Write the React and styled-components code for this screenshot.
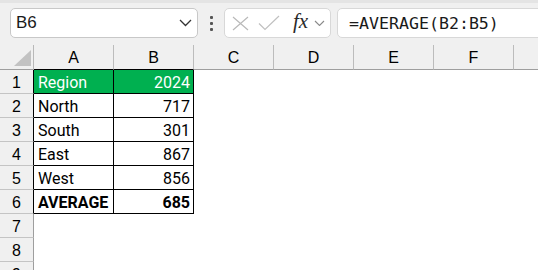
import React from "react";
import styled, { createGlobalStyle } from "styled-components";

const GlobalStyle = createGlobalStyle`
  html, body {
    margin: 0;
    padding: 0;
    background: #fff;
  }
  body {
    font-family: "Liberation Sans", Arial, sans-serif;
    color: #000;
  }
`;

const Page = styled.div`
  width: 538px;
  height: 270px;
  overflow: hidden;
  background: #fff;
`;

const Toolbar = styled.div`
  box-sizing: border-box;
  height: 45px;
  background: #f0f0f0;
  border-top: 3px solid #e4e4e4;
  padding: 5px 0 0 10px;
  display: flex;
  align-items: flex-start;
  overflow: hidden;
`;

const Box = styled.div`
  box-sizing: border-box;
  height: 30px;
  background: #fff;
  border: 1px solid ${(p) => p.$border || "#cfcfcf"};
  border-radius: 5px;
  display: flex;
  align-items: center;
  flex-shrink: 0;
`;

const NameBox = styled(Box)`
  width: 188px;
  padding: 0 5px 0 5px;
  justify-content: space-between;
  font-size: 17px;
  color: #1a1a1a;
`;

const Dots = styled.div`
  width: 26px;
  height: 30px;
  display: flex;
  flex-direction: column;
  align-items: center;
  justify-content: center;
  gap: 3px;
  flex-shrink: 0;

  span {
    width: 3px;
    height: 3px;
    background: #555;
    border-radius: 1px;
  }
`;

const ActionBox = styled(Box)`
  width: 107px;
  padding-left: 7px;
`;

const Fx = styled.span`
  font-family: "Liberation Serif", "Times New Roman", serif;
  font-style: italic;
  font-size: 21px;
  color: #2a2a2a;
  margin-left: 13px;
  margin-top: -3px;
`;

const FxChevron = styled.span`
  display: flex;
  margin-left: 6px;
`;

const FormulaBox = styled(Box)`
  width: 240px;
  margin-left: 6px;
  padding-left: 11px;
  font-family: "DejaVu Sans Mono", "Liberation Mono", monospace;
  font-size: 16.6px;
  color: #1a1a1a;
`;

const Row = styled.div`
  display: flex;
  height: ${(p) => (p.$header ? 25 : 24)}px;
`;

const Corner = styled.div`
  box-sizing: border-box;
  width: 34px;
  flex-shrink: 0;
  background: #f0f0f0;
  border-right: 1px solid #b8b8b8;
  border-bottom: 1px solid #9e9e9e;
  display: flex;
  align-items: flex-end;
  justify-content: flex-end;
  padding: 0 2px 3px 0;
`;

const ColHead = styled.div`
  box-sizing: border-box;
  width: 80px;
  flex-shrink: 0;
  background: #f0f0f0;
  border-right: 1px solid #bcbcbc;
  border-bottom: 1px solid ${(p) => (p.$dark ? "#000" : "#9e9e9e")};
  text-align: center;
  font-size: 16px;
  line-height: 22px;
  padding-top: 2px;
`;

const RowHead = styled.div`
  box-sizing: border-box;
  width: 34px;
  flex-shrink: 0;
  background: #f0f0f0;
  border-right: 1px solid ${(p) => (p.$dark ? "#000" : "#9e9e9e")};
  border-bottom: 1px solid #c4c4c4;
  text-align: center;
  font-size: 16px;
  line-height: 21px;
  padding-top: 2px;
`;

const Cell = styled.div`
  box-sizing: border-box;
  width: 80px;
  flex-shrink: 0;
  font-family: Roboto, "Liberation Sans", sans-serif;
  font-size: 16px;
  line-height: 21px;
  padding: 2px 3px 0 4px;
  white-space: nowrap;
  overflow: hidden;
  text-align: ${(p) => (p.$num ? "right" : "left")};
  font-weight: ${(p) => (p.$bold ? 700 : 400)};
  background: ${(p) => (p.$fill ? "#00b050" : "#fff")};
  color: ${(p) => (p.$fill ? "#fff" : "#000")};
  border-right: 1px solid ${(p) => (p.$boxed ? "#000" : "transparent")};
  border-bottom: 1px solid ${(p) => (p.$boxed ? "#000" : "transparent")};
`;

const Chevron = ({ w = 13, color = "#333", sw = 1.3 }) => (
  <svg width={w} height={w / 2 + 1} viewBox={`0 0 ${w} ${w / 2 + 1}`}>
    <polyline
      points={`1,1 ${w / 2},${w / 2} ${w - 1},1`}
      fill="none"
      stroke={color}
      strokeWidth={sw}
    />
  </svg>
);

const columns = ["A", "B", "C", "D", "E", "F", ""];

const data = [
  { label: "Region", value: "2024", head: true },
  { label: "North", value: "717" },
  { label: "South", value: "301" },
  { label: "East", value: "867" },
  { label: "West", value: "856" },
  { label: "AVERAGE", value: "685", bold: true },
];

export default function App() {
  const rows = [1, 2, 3, 4, 5, 6, 7, 8, 9];
  return (
    <Page>
      <GlobalStyle />
      <Toolbar>
        <NameBox $border="#c8c8c8">
          <span>B6</span>
          <Chevron w={13} color="#333" />
        </NameBox>
        <Dots>
          <span />
          <span />
          <span />
        </Dots>
        <ActionBox $border="#d8d8d8">
          <svg width="17" height="15" viewBox="0 0 17 15">
            <path d="M1 1 L16 14 M16 1 L1 14" stroke="#b9b9b9" strokeWidth="1.2" fill="none" />
          </svg>
          <svg width="22" height="16" viewBox="0 0 22 16" style={{ marginLeft: 9 }}>
            <path d="M1 8.5 L7 14.5 L21 1" stroke="#c0c0c0" strokeWidth="1.2" fill="none" />
          </svg>
          <Fx>fx</Fx>
          <FxChevron>
            <Chevron w={11} color="#8a8a8a" sw={1.1} />
          </FxChevron>
        </ActionBox>
        <FormulaBox $border="#d8d8d8">=AVERAGE(B2:B5)</FormulaBox>
      </Toolbar>

      <Row $header>
        <Corner>
          <svg width="17" height="16" viewBox="0 0 17 16">
            <polygon points="0,16 17,16 17,0" fill="#c2c2c2" />
          </svg>
        </Corner>
        {columns.map((c, i) => (
          <ColHead key={i} $dark={i < 2}>
            {c}
          </ColHead>
        ))}
      </Row>

      {rows.map((r) => {
        const d = data[r - 1];
        return (
          <Row key={r}>
            <RowHead $dark={!!d}>{r}</RowHead>
            <Cell $boxed={!!d} $fill={d && d.head} $bold={d && d.bold}>
              {d ? d.label : ""}
            </Cell>
            <Cell $boxed={!!d} $fill={d && d.head} $bold={d && d.bold} $num>
              {d ? d.value : ""}
            </Cell>
            {columns.slice(2).map((c, i) => (
              <Cell key={i} />
            ))}
          </Row>
        );
      })}
    </Page>
  );
}
